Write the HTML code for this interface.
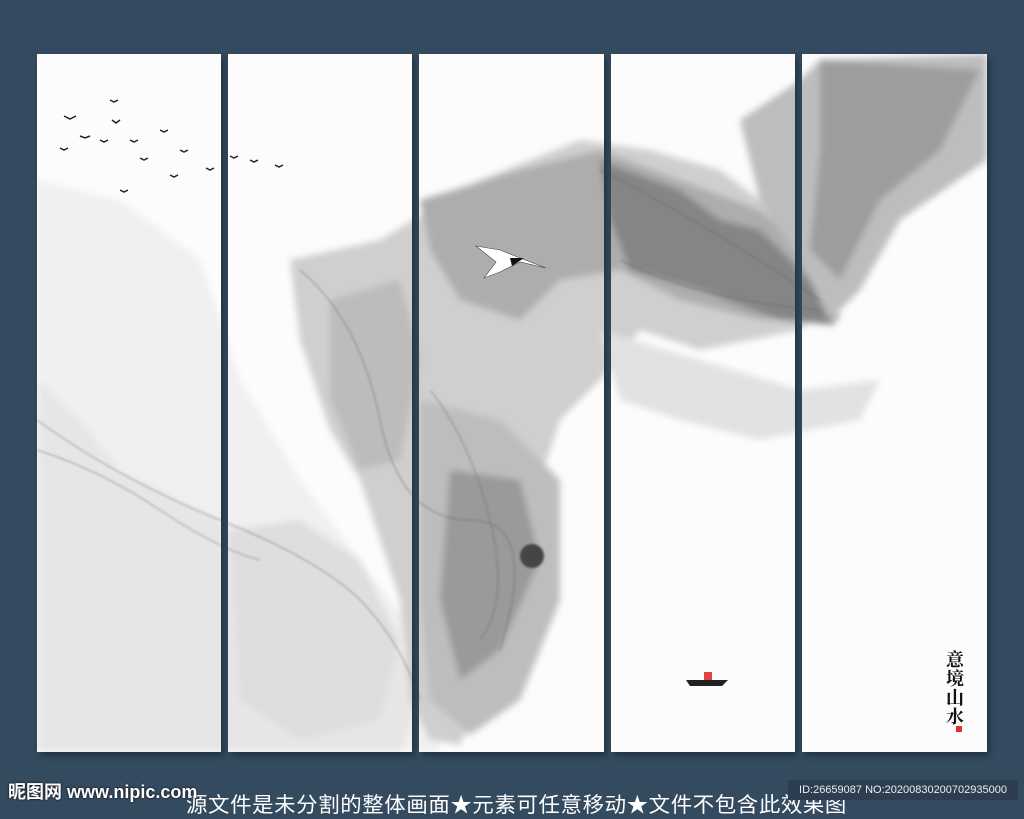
<!DOCTYPE html>
<html><head><meta charset="utf-8"><style>
html,body{margin:0;padding:0;width:1024px;height:809px;overflow:hidden;background:#344a5f;font-family:"Liberation Sans","Noto Sans CJK SC",sans-serif}
svg{position:absolute;left:0;top:0}
.wm{position:absolute;left:8px;top:778px;color:#fff;font-size:18px;font-weight:bold;text-shadow:0 0 2px #000;z-index:2}
.wm2{position:absolute;left:186px;top:789px;color:#fff;font-size:21px;letter-spacing:0.6px;white-space:nowrap;transform:scaleX(1.02);transform-origin:left}
.id{position:absolute;left:788px;top:780px;width:230px;height:20px;background:#2c3e50;color:#eee;font-size:11px;line-height:20px;text-align:center;z-index:3}
.cal{position:absolute;left:946px;top:650px;font-family:"Noto Serif CJK SC",serif;font-size:18px;line-height:19px;width:22px;color:#111;font-weight:bold}
</style></head><body>
<svg width="1024" height="809" viewBox="0 0 1024 809">
<defs>
<filter id="b" x="-20%" y="-20%" width="140%" height="140%"><feGaussianBlur stdDeviation="3.5"/></filter>
<filter id="b2"><feGaussianBlur stdDeviation="1"/></filter>
<filter id="sh"><feGaussianBlur stdDeviation="3"/></filter>
<clipPath id="p">
<rect x="37" y="54" width="184" height="698"/><rect x="228" y="54" width="184" height="698"/><rect x="419" y="54" width="185" height="698"/><rect x="611" y="54" width="184" height="698"/><rect x="802" y="54" width="185" height="698"/>
</clipPath>
</defs>
<g fill="#1c2a38" filter="url(#sh)" opacity=".7">
<rect x="40" y="58" width="184" height="698"/><rect x="231" y="58" width="184" height="698"/><rect x="422" y="58" width="185" height="698"/><rect x="614" y="58" width="184" height="698"/><rect x="805" y="58" width="185" height="698"/>
</g>
<g clip-path="url(#p)">
<rect x="0" y="0" width="1024" height="809" fill="#fcfcfc"/>
<g filter="url(#b)">
<path d="M37 180 L120 200 L200 260 L240 380 L300 480 L360 560 L420 640 L440 752 L37 752Z" fill="#f0f0f0"/>
<path d="M37 380 L80 420 L120 470 L220 520 L300 580 L380 600 L420 700 L400 752 L37 752 L37 600Z" fill="#e6e6e6"/>
<path d="M290 260 L380 240 L430 210 L480 180 L580 140 L650 150 L720 170 L760 200 L800 250 L840 300 L800 330 L700 350 L640 330 L600 380 L560 420 L540 480 L520 560 L490 620 L480 700 L460 745 L430 740 L410 700 L400 600 L360 480 L330 430 L300 340Z" fill="#cfcfcf"/>
<path d="M420 200 L470 185 L520 170 L600 150 L680 180 L760 210 L830 270 L840 320 L760 320 L680 300 L620 270 L560 280 L520 320 L460 300 L430 250Z" fill="#adadad"/>
<path d="M600 160 L680 190 L720 220 L760 230 L820 290 L835 325 L780 320 L700 290 L630 270 L610 220Z" fill="#858585"/>
<path d="M740 120 L800 80 L820 60 L987 54 L987 160 L900 220 L860 290 L830 320 L800 260 L760 200Z" fill="#bdbdbd"/>
<path d="M820 60 L980 70 L940 150 L880 200 L840 280 L810 250 L820 150Z" fill="#9d9d9d"/>
<path d="M420 400 L500 420 L560 480 L560 600 L520 700 L470 735 L430 700 L420 600Z" fill="#bdbdbd"/>
<path d="M450 470 L520 480 L540 560 L500 650 L460 680 L440 600Z" fill="#9a9a9a"/>
<path d="M600 330 L700 360 L800 390 L880 380 L860 420 L760 440 L680 420 L620 400Z" fill="#e2e2e2"/>
<path d="M230 530 L300 520 L360 560 L400 640 L380 720 L300 740 L240 700Z" fill="#dedede"/>
<path d="M330 300 L400 280 L420 360 L400 460 L360 470 L330 400Z" fill="#bcbcbc"/>
</g>
<g fill="none" stroke="#666" stroke-width="1" opacity=".55" filter="url(#b2)">
<path d="M37 420 Q120 480 220 520 T360 600 T420 700"/>
<path d="M37 450 Q100 470 160 510 T260 560"/>
<path d="M300 270 Q360 320 380 420 T470 520 T500 650"/>
<path d="M430 390 Q470 440 490 520 T480 640"/>
<path d="M600 170 Q700 220 820 300"/>
<path d="M620 260 Q700 300 820 310"/>
</g>
<ellipse cx="532" cy="556" rx="12" ry="12" fill="#444" filter="url(#b2)"/>
<g stroke="#222" stroke-width="1.5" fill="none">
<path d="M64 116 l6 3 l6 -3"/><path d="M80 136 l5 2 l5 -2"/><path d="M112 120 l4 3 l4 -3"/><path d="M130 140 l4 2 l4 -2"/><path d="M160 130 l4 2 l4-2"/><path d="M60 148 l4 2 l4 -2"/><path d="M100 140 l4 2 l4 -2"/><path d="M140 158 l4 2 l4 -2"/><path d="M180 150 l4 2 l4 -2"/><path d="M206 168 l4 2 l4 -2"/><path d="M230 156 l4 2 l4 -2"/><path d="M250 160 l4 2 l4 -2"/><path d="M275 165 l4 2 l4 -2"/><path d="M120 190 l4 2 l4 -2"/><path d="M170 175 l4 2 l4 -2"/><path d="M110 100 l4 2 l4 -2"/>
</g>
<path d="M476 246 L500 250 L520 258 L546 268 L520 262 L500 272 L484 278 L496 262Z" fill="#fff" stroke="#444" stroke-width=".6"/>
<path d="M510 258 L524 258 L512 266Z" fill="#111"/>
<path d="M686 680 L728 680 L722 686 L690 686Z" fill="#222"/>
<rect x="704" y="672" width="8" height="8" fill="#d44"/>
<rect x="956" y="726" width="6" height="6" fill="#d33"/>
</g>
</svg>
<div class="cal">意境山水</div>
<div class="wm">昵图网 www.nipic.com</div>
<div class="wm2">源文件是未分割的整体画面★元素可任意移动★文件不包含此效果图</div>
<div class="id">ID:26659087 NO:20200830200702935000</div>
</body></html>
